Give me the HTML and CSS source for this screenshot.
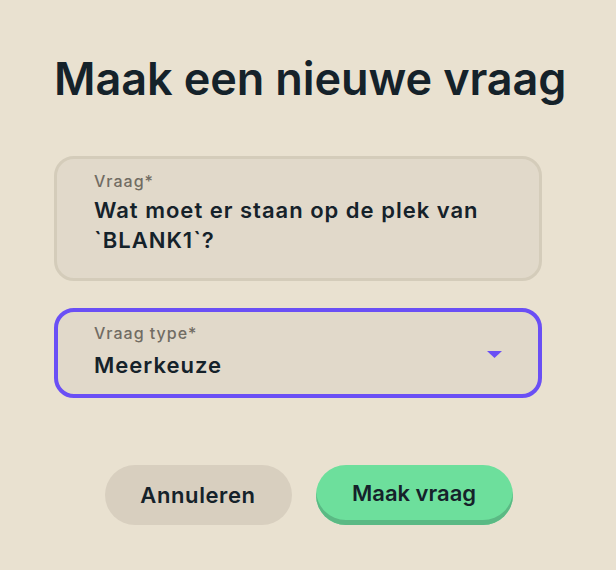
FILE: index.html
```html
<!DOCTYPE html>
<html>
<head>
	<title>Maak een nieuwe vraag</title>
	<meta name="viewport" content="width=device-width, initial-scale=1.0">
	<link rel="stylesheet" href="styles.css">
</head>
<body>
	<div class="dialog">
		<h1>Maak een nieuwe vraag</h1>
		<div class="fields">
			<label class="field" id="question">
				<span class="label">Vraag*</span>
				<span class="value">Wat moet er staan op de plek van `BLANK1`?</span>
			</label>
			<label class="field focused" id="type">
				<span class="label">Vraag type*</span>
				<span class="value">Meerkeuze</span>
				<svg class="arrow" width="15" height="7" viewBox="0 0 15 7"><path d="M0 0h15L7.5 7z" fill="#6a4ff5"/></svg>
			</label>
		</div>
		<div class="actions">
			<button class="cancel">Annuleren</button>
			<button class="submit">Maak vraag</button>
		</div>
	</div>
</body>
</html>
```

FILE: styles.css
```css
html, body {
	margin: 0;
	padding: 0;
	background: #e9e1d0;
	color: #15222a;
	font-family: Inter, "Noto Sans", sans-serif;
}

.dialog {
	width: 509px;
	margin: 0 auto;
	padding-left: 1px;
}

h1 {
	margin: 52px 0 0;
	font-size: 45px;
	line-height: 54px;
	font-weight: 600;
	text-align: center;
	white-space: nowrap;
	letter-spacing: -0.1px;
}

.fields {
	margin-top: 50px;
	display: flex;
	flex-direction: column;
	gap: 27px;
}

.field {
	position: relative;
	display: flex;
	flex-direction: column;
	width: 488px;
	box-sizing: border-box;
	background: #e1d9ca;
	border: 3px solid #d4ccba;
	border-radius: 20px;
	padding: 12px 40px 0 37px;
}

.field.focused {
	border: 4px solid #6a4ff5;
	padding-left: 36px;
	padding-top: 11px;
}

.label {
	font-size: 16px;
	line-height: 20px;
	font-weight: 500;
	color: #716c63;
	letter-spacing: 1px;
}

.value {
	font-size: 22px;
	line-height: 30px;
	font-weight: 600;
	letter-spacing: 1px;
}

#question {
	height: 125px;
}

#question .value {
	margin-top: 4px;
}

#type {
	height: 90px;
}

#type .value {
	margin-top: 7px;
}

.arrow {
	position: absolute;
	right: 36px;
	top: 39px;
}

.actions {
	margin-top: 67px;
	display: flex;
	justify-content: center;
	gap: 24px;
}

button {
	height: 60px;
	border: none;
	border-radius: 30px;
	font-family: inherit;
	font-size: 22px;
	font-weight: 600;
	color: #15222a;
	cursor: pointer;
}

.cancel {
	width: 187px;
	background: #d8cfbf;
	letter-spacing: 0.6px;
}

.submit {
	width: 197px;
	background: #6ddf9c;
	box-shadow: inset 0 -5px 0 #5bb984;
	padding-bottom: 5px;
}
```
